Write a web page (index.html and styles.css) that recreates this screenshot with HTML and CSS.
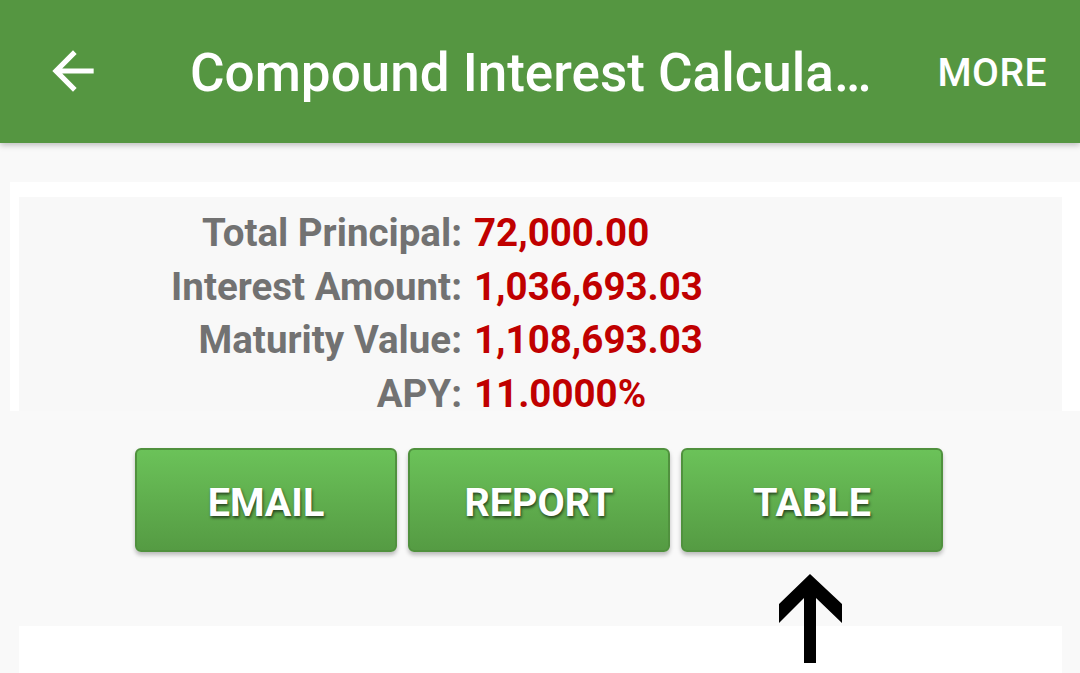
FILE: index.html
```html
<!DOCTYPE html>
<html>
<head>
<meta charset="utf-8">
<link rel="stylesheet" href="styles.css">
</head>
<body>
<header class="toolbar">
  <svg class="back" viewBox="0 0 24 24" width="62" height="62"><path fill="#fff" d="M20 11H7.83l5.59-5.59L12 4l-8 8 8 8 1.41-1.41L7.83 13H20v-2z"/></svg>
  <div class="title">Compound Interest Calcula…</div>
  <div class="more">MORE</div>
</header>
<main class="content">
  <section class="card">
    <div class="results">
      <div class="label">Total Principal:</div><div class="value">72,000.00</div>
      <div class="label">Interest Amount:</div><div class="value">1,036,693.03</div>
      <div class="label">Maturity Value:</div><div class="value">1,108,693.03</div>
      <div class="label">APY:</div><div class="value">11.0000%</div>
    </div>
  </section>
  <div class="buttons">
    <button class="btn">EMAIL</button>
    <button class="btn">REPORT</button>
    <button class="btn">TABLE</button>
  </div>
  <section class="lower"></section>
  <svg class="pointer" width="66" height="92" viewBox="0 0 66 92"><path fill="#000" d="M32 0 L64 30 L64 49 L38 24 L38 89 L26 89 L26 24 L1 49 L1 30 Z"/></svg>
</main>
</body>
</html>
```
FILE: styles.css
```css
html, body {
  margin: 0;
  padding: 0;
}
body {
  width: 1080px;
  height: 673px;
  overflow: hidden;
  background: #f9f9f9;
  font-family: Roboto, "Liberation Sans", sans-serif;
}
.toolbar {
  height: 143px;
  background: #559641;
  display: flex;
  align-items: center;
  box-shadow: 0 2px 6px rgba(0,0,0,0.25);
  position: relative;
  z-index: 2;
  color: #fff;
}
.back {
  margin-left: 42px;
  margin-top: -2px;
  flex: none;
}
.title {
  margin-left: 86px;
  font-size: 53px;
  font-weight: 500;
  white-space: nowrap;
  flex: 1;
  margin-top: 2px;
}
.more {
  font-size: 39px;
  font-weight: 500;
  letter-spacing: 0.5px;
  margin-right: 33px;
  margin-top: 2px;
}
.content {
  position: relative;
  padding-top: 39px;
}
.card {
  margin-left: 10px;
  background: #fff;
  padding: 15px 0 0 9px;
}
.results {
  width: 1043px;
  height: 214px;
  background: #f8f8f8;
  box-sizing: border-box;
  padding-top: 9px;
  display: grid;
  grid-template-columns: 443px auto;
  grid-auto-rows: 53.5px;
  column-gap: 12px;
  font-size: 38.5px;
  line-height: 53.5px;
  font-weight: 700;
}
.label {
  text-align: right;
  color: #727272;
}
.value {
  color: #c00000;
}
.buttons {
  display: flex;
  justify-content: center;
  gap: 11px;
  margin-top: 37px;
  padding-right: 2px;
}
.btn {
  width: 262px;
  height: 104px;
  border: 2px solid #50913e;
  border-radius: 6px;
  background: linear-gradient(#6bc259, #559b43);
  box-shadow: 0 3px 4px rgba(0,0,0,0.25);
  color: #fff;
  font-family: Roboto, "Liberation Sans", sans-serif;
  font-size: 39.5px;
  font-weight: 700;
  text-shadow: 1px 2px 3px rgba(0,0,0,0.6);
  padding: 5px 0 0 0;
}
.lower {
  margin: 74px 18px 0 19px;
  height: 60px;
  background: #fff;
}
.pointer {
  position: absolute;
  left: 778px;
  top: 431px;
}
```
